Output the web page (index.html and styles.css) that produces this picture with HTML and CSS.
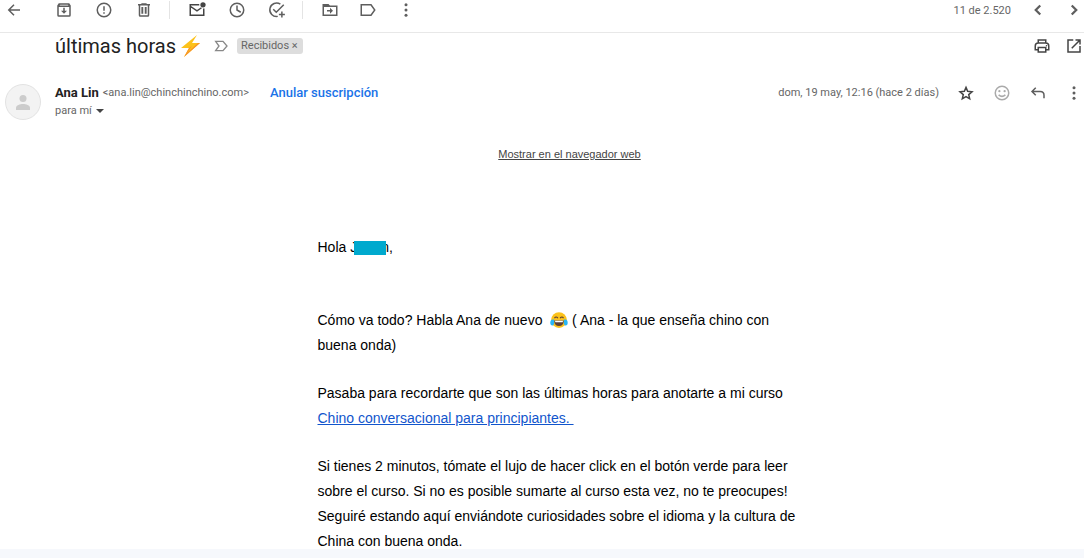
FILE: index.html
```html
<!DOCTYPE html>
<html lang="es">
  <head>
    <meta charset="utf-8">
    <meta name="viewport" content="width=device-width, initial-scale=1">
    <title>últimas horas</title>
    <link rel="stylesheet" href="styles.css">
  </head>
  <body>
    <main class="mail">
      <header class="toolbar">
        <button class="icon back" aria-label="Volver"><svg viewBox="0 0 24 24"><path class="line" d="M20 12H5M12 5l-7 7 7 7"/></svg></button>
        <div class="group">
          <button class="icon" aria-label="Archivar"><svg viewBox="0 0 24 24"><path fill-rule="evenodd" d="M5 3h14l2 3v13a2 2 0 0 1-2 2H5a2 2 0 0 1-2-2V6zM5 8v11h14V8zM6 6h12l-1-1H7zM11 9h2v4h3l-4 4-4-4h3z"/></svg></button>
          <button class="icon" aria-label="Marcar como spam"><svg viewBox="0 0 24 24"><circle class="line" cx="12" cy="12" r="9"/><path d="M11 7h2v6h-2zM11 15h2v2h-2z"/></svg></button>
          <button class="icon" aria-label="Eliminar"><svg viewBox="0 0 24 24"><path fill-rule="evenodd" d="M15 3l1 1h4v2h-1v13a2 2 0 0 1-2 2H7a2 2 0 0 1-2-2V6H4V4h4l1-1zM7 6v13h10V6zM8.500 8h2.500v9H8.500zM13 8h2.500v9H13z"/></svg></button>
        </div>
        <div class="group">
          <button class="icon dark" aria-label="Marcar como no leído"><svg viewBox="0 0 24 24"><path class="line" d="M15 5H3v14h18V10M3 7l9 6 6-4"/><circle cx="20" cy="5" r="3.500"/></svg></button>
          <button class="icon" aria-label="Posponer"><svg viewBox="0 0 24 24"><path class="line" d="M12 3a9 9 0 1 0 0 18 9 9 0 0 0 0-18M12 6v6l5 3"/></svg></button>
          <button class="icon" aria-label="Añadir a Tareas"><svg viewBox="0 0 24 24"><path class="line" d="M16.500 4.200A9 9 0 1 0 13 20.500M7 11l4 4L21 5M18.500 14v8M14.500 18h8"/></svg></button>
        </div>
        <div class="group folders">
          <button class="icon" aria-label="Mover a"><svg viewBox="0 0 24 24"><path fill-rule="evenodd" d="M2 4h8l2 2h10v14H2zM4 8v10h16V8zM12 9l4 4-4 4v-3H8v-2h4z"/></svg></button>
          <button class="icon" aria-label="Etiquetas"><svg viewBox="0 0 24 24"><path class="line" d="M3 5h13l5 7-5 7H3z"/></svg></button>
          <button class="icon" aria-label="Más"><svg viewBox="0 0 24 24"><circle cx="12" cy="5" r="2"/><circle cx="12" cy="12" r="2"/><circle cx="12" cy="19" r="2"/></svg></button>
        </div>
        <div class="pager">
          <span>11 de 2.520</span>
          <button class="icon" aria-label="Más reciente"><svg viewBox="0 0 24 24"><path class="line bold" d="M15 6l-6 6 6 6"/></svg></button>
          <button class="icon" aria-label="Anterior"><svg viewBox="0 0 24 24"><path class="line bold" d="M9 6l6 6-6 6"/></svg></button>
        </div>
      </header>

      <div class="subject">
        <h1>últimas horas</h1>
        <svg class="bolt" viewBox="0 0 24 24" role="img" aria-label="Rayo"><path fill="#fcc21b" d="M18 1L2 14l8 0L5 23 21 9l-8 0z"/><path fill="#f79329" d="M10 14L5 23 21 9l-2 0L8 19l5-7z"/></svg>
        <svg class="important" viewBox="0 0 24 24"><path d="M4 5h11l6 7-6 7H4l5-7z"/></svg>
        <span class="chip">Recibidos <button aria-label="Quitar etiqueta Recibidos">×</button></span>
        <div class="actions">
          <button class="icon dark" aria-label="Imprimir"><svg viewBox="0 0 24 24"><path class="line" d="M7 8V4h10v4M7 17H3V12q0-4 4-4h10q4 0 4 4v5h-4M7 14h10v6H7z"/><circle cx="18" cy="11.500" r="1"/></svg></button>
          <button class="icon dark" aria-label="Abrir en una ventana nueva"><svg viewBox="0 0 24 24"><path class="line" d="M11 4H4v16h16v-8M14 4h6v6M20 4L9 15"/></svg></button>
        </div>
      </div>

      <div class="sender">
        <svg class="avatar" viewBox="0 0 36 36"><circle class="disc" cx="18" cy="18" r="17.500"/><circle cx="18" cy="14.500" r="3.500"/><path d="M11 26v-2c0-3 4-4 7-4s7 1 7 4v2z"/></svg>
        <div class="who">
          <div class="from"><strong>Ana Lin</strong> <span>&lt;ana.lin@chinchinchino.com&gt;</span> <a class="unsubscribe" href="#">Anular suscripción</a></div>
          <button class="to">para mí <span class="caret"></span></button>
        </div>
        <time class="date">dom, 19 may, 12:16 (hace 2 días)</time>
        <div class="actions">
          <button class="icon dark" aria-label="Destacar"><svg viewBox="0 0 24 24"><path class="line" d="M12 4.500l2.200 5.300 5.800.5-4.400 3.800 1.300 5.600-4.900-3-4.900 3 1.300-5.600L4 10.300l5.800-.5z"/></svg></button>
          <button class="icon faded" aria-label="Añadir reacción"><svg viewBox="0 0 24 24"><circle class="line" cx="12" cy="12" r="9"/><circle cx="8.500" cy="9.500" r="1.500"/><circle cx="15.500" cy="9.500" r="1.500"/><path class="line" d="M7.500 14.500q4.500 4 9 0"/></svg></button>
          <button class="icon" aria-label="Responder"><svg viewBox="0 0 24 24"><path class="line" d="M9 5l-5 5 5 5M4 10h11q5 0 5 5v4"/></svg></button>
          <button class="icon" aria-label="Más opciones"><svg viewBox="0 0 24 24"><circle cx="12" cy="5" r="2"/><circle cx="12" cy="12" r="2"/><circle cx="12" cy="19" r="2"/></svg></button>
        </div>
      </div>

      <div class="content">
        <article class="message">
          <a class="browser-link" href="#">Mostrar en el navegador web</a>
          <p class="greeting">Hola J<span class="cover"></span>n,</p>
          <p>Cómo va todo? Habla Ana de nuevo &nbsp;<svg class="joy" viewBox="0 0 24 24" role="img" aria-label="Cara llorando de risa"><circle cx="12" cy="12" r="10.500" fill="#fcc21b"/><path d="M5.500 12.500h13q-.5 7.500-6.500 7.500t-6.500-7.500z" fill="#5d4037"/><path d="M6.500 13h11l-.7 2H7.200z" fill="#fff"/><path d="M6 9.500q2-3 4.500 0M13.500 9.500q2.500-3 4.500 0" fill="none" stroke="#5d4037" stroke-width="1.500"/><path d="M5.500 11.500C1 11 0 14 .5 17s4.500 3 5-.5zM18.500 11.500c4.500-.5 5.500 2.500 5 5.500s-4.500 3-5-.5z" fill="#29b6f6"/></svg> ( Ana - la que enseña chino con buena onda)</p>
          <p>Pasaba para recordarte que son las últimas horas para anotarte a mi curso <a href="#">Chino conversacional para principiantes.&nbsp;</a></p>
          <p>Si tienes 2 minutos, tómate el lujo de hacer click en el botón verde para leer sobre el curso. Si no es posible sumarte al curso esta vez, no te preocupes! Seguiré estando aquí enviándote curiosidades sobre el idioma y la cultura de China con buena onda.</p>
        </article>
      </div>
    </main>
  </body>
</html>
```
FILE: styles.css
```css
*{
  box-sizing: border-box;
}
body{
  display: flex;
  flex-direction: column;
  height: 100vh;
  margin: 0;
  padding-bottom: 9px;
  background-color: #f6f8fc;
  color: #222;
  font-family: Roboto, "Liberation Sans", sans-serif;
  font-size: 11px;
}
button{
  padding: 0;
  border: 0;
  background: none;
  color: inherit;
  font: inherit;
  cursor: pointer;
}
.mail{
  flex: 1;
  min-height: 0;
  overflow: hidden;
  background-color: #fff;
}

/* iconos */
.icon{
  flex: none;
  width: 18px;
  height: 18px;
  color: #5e5e5e;
}
.icon svg{
  display: block;
  width: 18px;
  height: 18px;
  fill: currentColor;
}
.icon .line{
  fill: none;
  stroke: currentColor;
  stroke-width: 2;
}
.icon .bold{
  stroke-width: 3;
}
.dark{
  color: #444;
}
.faded{
  color: #aaa;
}

/* barra superior */
.toolbar{
  display: flex;
  align-items: flex-start;
  height: 33px;
  padding: 1px 1px 0 5px;
  border-bottom: 1px solid #e8e8e8;
}
.back{
  margin-right: 32px;
}
.group{
  display: flex;
  gap: 22px;
  padding-right: 16px;
}
.group + .group{
  padding-left: 18px;
  border-left: 1px solid #e4e4e4;
}
.group.folders{
  gap: 20px;
}
.pager{
  display: flex;
  align-items: center;
  gap: 18px;
  margin-left: auto;
  color: #666;
}

/* asunto */
.subject{
  display: flex;
  align-items: center;
  height: 25px;
  padding: 0 1px 0 55px;
}
h1{
  margin: 0;
  font-size: 20px;
  font-weight: 400;
}
.bolt{
  width: 24px;
  height: 24px;
  margin-left: 3px;
}
.important{
  width: 16px;
  height: 16px;
  margin: 0 8px 0 10px;
  fill: none;
  stroke: #888;
  stroke-width: 2;
}
.chip{
  padding: 0 5px 0 4px;
  border-radius: 3px;
  background-color: #ddd;
  color: #666;
  line-height: 16px;
}
.actions{
  display: flex;
  gap: 14px;
  margin-left: auto;
}

/* remitente */
.sender{
  display: flex;
  align-items: flex-start;
  padding: 26px 1px 0 5px;
  color: #666;
}
.avatar{
  flex: none;
  width: 36px;
  height: 36px;
  margin-right: 14px;
  fill: #ccc;
}
.disc{
  fill: #f3f3f3;
  stroke: #e2e2e2;
}
.who{
  line-height: 18px;
}
.from{
  display: flex;
  gap: 4px;
}
.from strong{
  color: #222;
  font-size: 13px;
  font-weight: 700;
}
.unsubscribe{
  margin-left: 17px;
  color: #1a73e8;
  font-size: 13px;
  font-weight: 500;
  text-decoration: none;
}
.to{
  display: block;
}
.caret{
  display: inline-block;
  margin-left: 2px;
  border: 4px solid transparent;
  border-top-color: #444;
  border-bottom: 0;
  vertical-align: middle;
}
.date{
  margin-left: auto;
  line-height: 18px;
}
.sender .actions{
  gap: 18px;
  margin-left: 18px;
}

/* mensaje */
.content{
  padding: 27px 0 0 55px;
}
.message{
  display: flex;
  flex-direction: column;
  max-width: 504px;
  margin: 0 auto;
  color: #000;
  font-family: "Liberation Sans", Arial, sans-serif;
  font-size: 14px;
  line-height: 25px;
}
.message p{
  max-width: 490px;
  margin: 0 0 23px;
}
.message a{
  color: #15c;
}
.message .browser-link{
  align-self: center;
  color: #444;
  font-size: 11px;
  line-height: 14px;
}
.message .greeting{
  margin: 74px 0 48px;
}
.cover{
  position: relative;
  display: inline-block;
  width: 32px;
  height: 14px;
  margin: 0 -5px 0 -3px;
  background-color: #00a9ce;
  vertical-align: -3px;
}
.joy{
  width: 18px;
  height: 18px;
  vertical-align: -4px;
}
```
